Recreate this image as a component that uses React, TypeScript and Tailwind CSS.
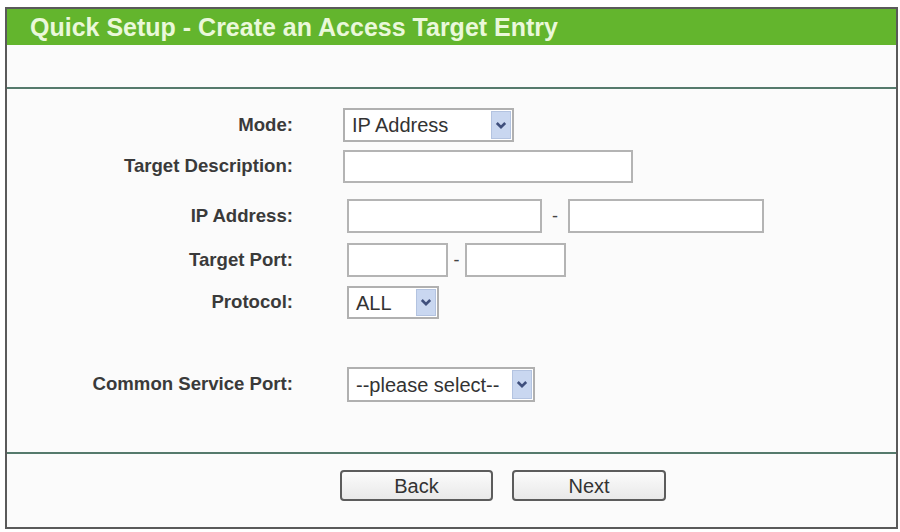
import React from "react";

const font = { fontFamily: '"Liberation Sans", Arial, sans-serif' };

function Arrow() {
  return (
    <div className="flex h-full w-[20px] items-center justify-center bg-[#c9d7f0] border border-[#b3c3e0]">
      <svg width="12" height="9" viewBox="0 0 12 9">
        <path d="M1.8 2 L6 6.2 L10.2 2" fill="none" stroke="#3f4f7c" strokeWidth="2.6" />
      </svg>
    </div>
  );
}

function Select({ w, text }: { w: string; text: string }) {
  return (
    <div className={`flex h-full items-center border-2 border-[#b0b0b0] bg-white pl-[7px] pr-[1px] py-[1px] ${w}`}>
      <span className="flex-1 text-[20px] leading-none text-[#333]">{text}</span>
      <Arrow />
    </div>
  );
}

function Input({ w }: { w: string }) {
  return <div className={`h-full border-2 border-[#b4b4b4] bg-white ${w}`} />;
}

function Row({ label, h, mt, children }: { label: string; h: string; mt: string; children: React.ReactNode }) {
  return (
    <div className={`flex items-center ${h} ${mt}`}>
      <div className="w-[286px] text-right text-[18.6px] font-bold leading-none text-[#3a3a3a]">{label}</div>
      <div className="ml-[50px] flex h-full items-center">{children}</div>
    </div>
  );
}

export default function App() {
  return (
    <div className="h-[532px] w-[900px] bg-white pl-[5px] pt-[7px]" style={font}>
      <div className="flex h-[522px] w-[893px] flex-col border-2 border-[#5a5a5a] bg-[#fbfbfb]">
        <div className="flex h-[36px] items-center bg-[#63b52d] pl-[23px]">
          <span className="text-[25px] font-bold leading-none text-[#eaf8da]">
            Quick Setup - Create an Access Target Entry
          </span>
        </div>
        <div className="h-[42px]" />
        <div className="h-[2px] bg-[#557a6c]" />
        <div className="flex flex-col pt-[19px] pb-[50px]">
          <Row label="Mode:" h="h-[34px]" mt="mt-0">
            <Select w="w-[171px]" text="IP Address" />
          </Row>
          <Row label="Target Description:" h="h-[33px]" mt="mt-[8px]">
            <Input w="w-[290px]" />
          </Row>
          <Row label="IP Address:" h="h-[34px]" mt="mt-[16px]">
            <div className="ml-[4px] flex h-full items-center">
              <Input w="w-[195px]" />
              <span className="w-[26px] text-center text-[18px] text-[#444]">-</span>
              <Input w="w-[196px]" />
            </div>
          </Row>
          <Row label="Target Port:" h="h-[34px]" mt="mt-[10px]">
            <div className="ml-[4px] flex h-full items-center">
              <Input w="w-[101px]" />
              <span className="w-[17px] text-center text-[18px] text-[#444]">-</span>
              <Input w="w-[101px]" />
            </div>
          </Row>
          <Row label="Protocol:" h="h-[33px]" mt="mt-[9px]">
            <div className="ml-[4px] h-full">
              <Select w="w-[92px]" text="ALL" />
            </div>
          </Row>
          <Row label="Common Service Port:" h="h-[35px]" mt="mt-[48px]">
            <div className="ml-[4px] h-full">
              <Select w="w-[188px]" text="--please select--" />
            </div>
          </Row>
        </div>
        <div className="h-[2px] bg-[#557a6c]" />
        <div className="flex flex-1 justify-start pl-[333px] pt-[16px]">
          <button className="h-[31px] w-[153px] rounded-[4px] border-2 border-[#5c5c5c] bg-gradient-to-b from-[#fbfbfb] to-[#e9e9e9] text-[20px] leading-none text-[#333]">
            Back
          </button>
          <button className="ml-[19px] h-[31px] w-[154px] rounded-[4px] border-2 border-[#5c5c5c] bg-gradient-to-b from-[#fbfbfb] to-[#e9e9e9] text-[20px] leading-none text-[#333]">
            Next
          </button>
        </div>
      </div>
    </div>
  );
}
